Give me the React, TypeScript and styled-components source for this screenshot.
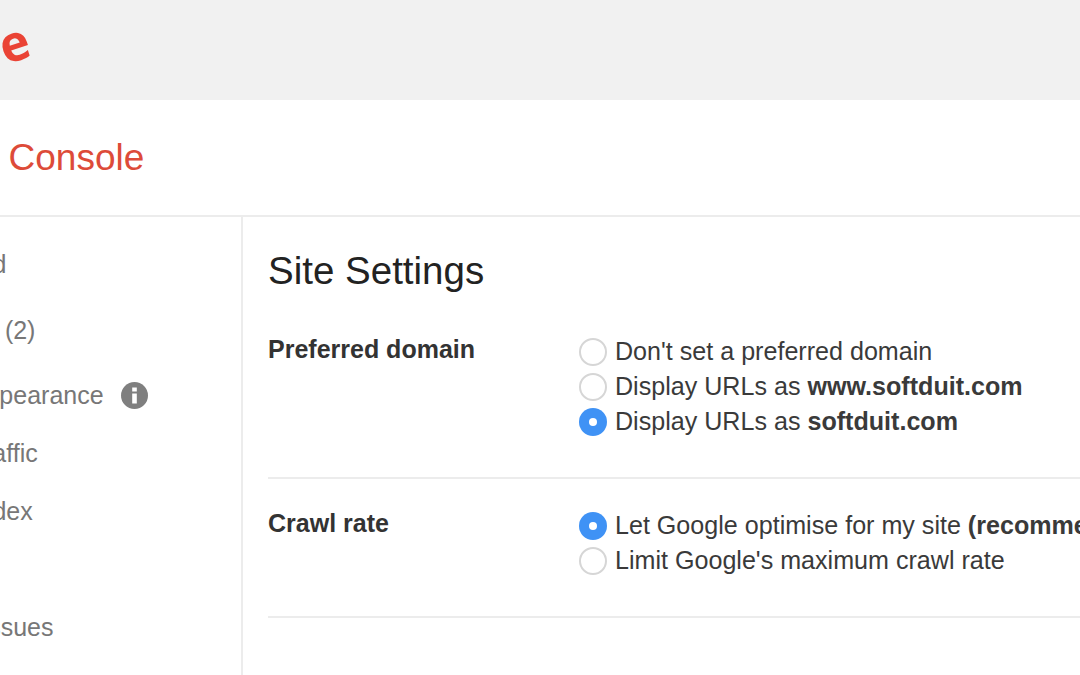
import React from 'react';
import styled, { createGlobalStyle } from 'styled-components';

const GlobalStyle = createGlobalStyle`
  html, body {
    margin: 0;
    padding: 0;
    background: #fff;
    overflow: hidden;
  }
`;

const navItems = [
  { label: 'Dashboard', extra: 8 },
  { label: 'Messages (2)', extra: 7 },
  { label: 'Search Appearance', info: true },
  { label: 'Search Traffic' },
  { label: 'Google Index' },
  { label: 'Crawl' },
  { label: 'Security Issues' },
];

const App: React.FC = () => (
  <>
    <GlobalStyle />
    <Page>
      <TopBar>
        <Logo>
          <span>Goog</span>
          <LogoL>l</LogoL>
          <LogoE>e</LogoE>
        </Logo>
      </TopBar>
      <TitleBar>
        <ProductName>Search Console</ProductName>
      </TitleBar>
      <Body>
        <Sidebar>
          {navItems.map((item) => (
            <NavItem key={item.label} $extra={item.extra}>
              {item.label}
              {item.info && (
                <InfoIcon viewBox="0 0 27 27">
                  <circle cx="13.5" cy="13.5" r="13.5" fill="#7f7f7f" />
                  <rect x="11.2" y="11.5" width="4.6" height="10" fill="#fff" />
                  <rect x="11.2" y="5.5" width="4.6" height="4" fill="#fff" />
                </InfoIcon>
              )}
            </NavItem>
          ))}
        </Sidebar>
        <Main>
          <Heading>Site Settings</Heading>
          <Section>
            <SectionLabel>Preferred domain</SectionLabel>
            <Options>
              <Option>
                <Radio />
                <span>Don't set a preferred domain</span>
              </Option>
              <Option>
                <Radio />
                <span>
                  Display URLs as <b>www.softduit.com</b>
                </span>
              </Option>
              <Option>
                <Radio $checked />
                <span>
                  Display URLs as <b>softduit.com</b>
                </span>
              </Option>
            </Options>
          </Section>
          <Section>
            <SectionLabel>Crawl rate</SectionLabel>
            <Options>
              <Option>
                <Radio $checked />
                <span>
                  Let Google optimise for my site <b>(recommended)</b>
                </span>
              </Option>
              <Option>
                <Radio />
                <span>Limit Google's maximum crawl rate</span>
              </Option>
            </Options>
          </Section>
        </Main>
      </Body>
    </Page>
  </>
);

const Page = styled.div`
  width: 1080px;
  height: 675px;
  overflow: hidden;
  font-family: 'Liberation Sans', Arial, sans-serif;
  display: flex;
  flex-direction: column;
`;

const TopBar = styled.div`
  height: 100px;
  flex: none;
  background: #f1f1f1;
  display: flex;
  align-items: center;
`;

const Logo = styled.div`
  margin-left: -143px;
  margin-top: -16px;
  font-family: 'Open Sans', sans-serif;
  font-weight: 700;
  font-size: 50px;
  color: #4a86e8;
  white-space: nowrap;
`;

const LogoL = styled.span`
  color: #b9c9b9;
`;

const LogoE = styled.span`
  display: inline-block;
  color: #ea4335;
  transform: rotate(-18deg);
`;

const TitleBar = styled.div`
  height: 115px;
  flex: none;
  border-bottom: 2px solid #ececec;
  display: flex;
  align-items: center;
`;

const ProductName = styled.div`
  margin-left: -119px;
  font-size: 37px;
  color: #dd4b39;
  white-space: nowrap;
`;

const Body = styled.div`
  flex: 1;
  display: flex;
  min-height: 0;
`;

const Sidebar = styled.div`
  width: 241px;
  flex: none;
  border-right: 2px solid #ececec;
  padding-top: 18px;
`;

const NavItem = styled.div<{ $extra?: number }>`
  margin-left: -116px;
  margin-bottom: ${(p) => p.$extra ?? 0}px;
  height: 58px;
  font-size: 25px;
  color: #777;
  white-space: nowrap;
  display: flex;
  align-items: center;
`;

const InfoIcon = styled.svg`
  width: 27px;
  height: 27px;
  margin-left: 17px;
`;

const Main = styled.div`
  flex: 1;
  padding: 32px 0 0 25px;
  min-width: 0;
`;

const Heading = styled.h1`
  margin: 0 0 39px;
  font-size: 38.5px;
  line-height: 44px;
  font-weight: 400;
  color: #222;
`;

const Section = styled.div`
  display: flex;
  padding-bottom: 38px;
  margin-bottom: 27px;
  border-bottom: 2px solid #ececec;
  white-space: nowrap;
`;

const SectionLabel = styled.div`
  width: 311px;
  flex: none;
  font-size: 25px;
  font-weight: 700;
  line-height: 35px;
  color: #333;
`;

const Options = styled.div`
  display: flex;
  flex-direction: column;
  margin-top: 2px;
`;

const Option = styled.label`
  display: flex;
  align-items: center;
  gap: 8px;
  height: 35px;
  font-size: 25.1px;
  color: #3a3a3a;
`;

const Radio = styled.span<{ $checked?: boolean }>`
  width: 28px;
  height: 28px;
  box-sizing: border-box;
  border-radius: 50%;
  flex: none;
  background: ${(p) => (p.$checked ? '#3f92f5' : '#fff')};
  border: ${(p) => (p.$checked ? 'none' : '2px solid #d6d6d6')};
  display: flex;
  align-items: center;
  justify-content: center;

  &::after {
    content: '';
    display: ${(p) => (p.$checked ? 'block' : 'none')};
    width: 8px;
    height: 8px;
    border-radius: 50%;
    background: #fff;
  }
`;

export default App;
